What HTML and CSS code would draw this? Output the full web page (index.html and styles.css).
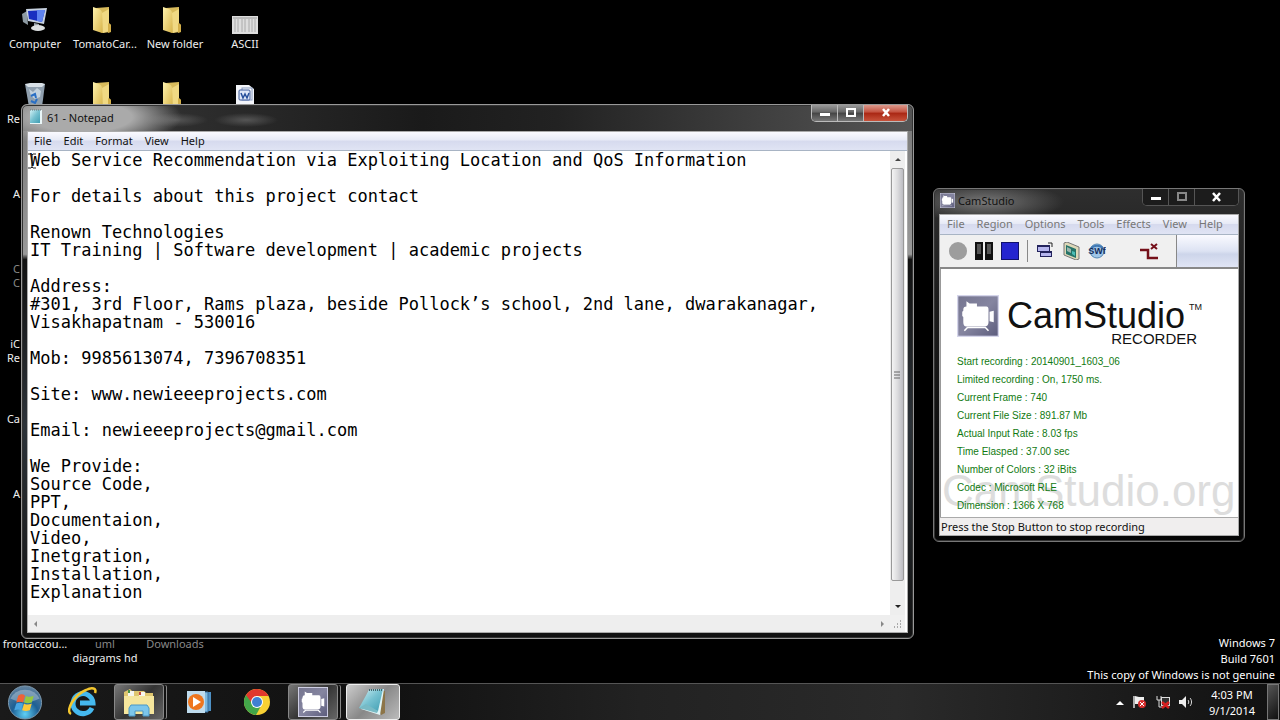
FILE: index.html
```html
<!DOCTYPE html>
<html lang="en">
<head>
    <meta charset="UTF-8">
    <meta name="viewport" content="width=device-width, initial-scale=1.0">
    <title>Desktop</title>
    <link rel="stylesheet" href="styles.css">
</head>
<body>
    <!-- shared icons -->
    <svg class="sprite" aria-hidden="true">
        <defs>
            <linearGradient id="folderFront" x1="0" y1="0" x2="1" y2="1">
                <stop offset="0" stop-color="#fff3ae"/>
                <stop offset="1" stop-color="#d9b64c"/>
            </linearGradient>
            <linearGradient id="camBack" x1="0" y1="0" x2="1" y2="1">
                <stop offset="0" stop-color="#75758f"/>
                <stop offset="0.5" stop-color="#8585a0"/>
                <stop offset="1" stop-color="#5c5c7c"/>
            </linearGradient>
            <linearGradient id="paper" x1="0" y1="0" x2="1" y2="1">
                <stop offset="0" stop-color="#d3f1f5"/>
                <stop offset="0.5" stop-color="#76c1d0"/>
                <stop offset="1" stop-color="#3f9db2"/>
            </linearGradient>
            <radialGradient id="orb" cx="0.5" cy="0.85" r="0.8">
                <stop offset="0" stop-color="#5fd0f5"/>
                <stop offset="0.5" stop-color="#1d5f94"/>
                <stop offset="1" stop-color="#5c7e9c"/>
            </radialGradient>
        </defs>
        <symbol id="folder" viewBox="0 0 20 28">
            <path d="M4 2l13-1v16l2 2v7l-9 1z" fill="#d9bc5c"/>
            <path d="M1 1l6 2c2 1 3 2 3 4v20l-9-3z" fill="url(#folderFront)"/>
            <path d="M10 7l1 20 6-2V3z" fill="#f0d983"/>
            <path d="M16 17l3 2v7l-3 1z" fill="#d3af49"/>
        </symbol>
        <symbol id="camera" viewBox="0 0 40 40">
            <rect x="0.5" y="0.5" width="39" height="39" fill="url(#camBack)" stroke="#d5d5ea" stroke-width="1.5"/>
            <path d="M9 6l3 2h7v5H9z" fill="#fff"/>
            <path d="M9 11h19q2 0 2 3v12q0 4-4 4H9q-3 0-3-4v-5l-1-1v-4l1-1v-1q0-3 3-3z" fill="#fff"/>
            <path d="M31 16l4-1v11l-4-1z" fill="#fff"/>
            <path d="M7 34l3-3h17l3 3" stroke="#fff" stroke-width="1.500" fill="none"/>
        </symbol>
        <symbol id="notes" viewBox="0 0 16 18">
            <path d="M2 2h12v14H2z" fill="#e9f6f8"/>
            <path d="M2 2h10v13H2z" fill="url(#paper)"/>
            <path d="M2 2h12" stroke="#60777c" stroke-dasharray="1 1"/>
        </symbol>
    </svg>

    <main class="desktop">
        <div class="icons">
            <a href="#" class="shortcut">
                <span class="glyph"><svg width="28" height="26" viewBox="0 0 28 26">
                    <path d="M1 7l5-3 1 14-5-3z" fill="#8d9aa2"/>
                    <path d="M5 2l21-1-3 16-16-3z" fill="#c6d1e0"/>
                    <path d="M7 4l17-1-3 12-13-3z" fill="#1a2fc0"/>
                    <path d="M16 3l8 0-3 12-5-1z" fill="#5f83ef"/>
                    <path d="M13 16l5 1v3h-5z" fill="#9aa3aa"/>
                    <ellipse cx="17" cy="21" rx="7" ry="3" fill="#dcdfe0"/>
                </svg></span>
                <span class="label">Computer</span>
            </a>
            <a href="#" class="shortcut"><span class="glyph dir"><svg width="20" height="28"><use href="#folder"/></svg></span><span class="label">TomatoCar...</span></a>
            <a href="#" class="shortcut"><span class="glyph dir"><svg width="20" height="28"><use href="#folder"/></svg></span><span class="label">New folder</span></a>
            <a href="#" class="shortcut">
                <span class="glyph low"><svg width="26" height="18" viewBox="0 0 26 18">
                    <rect width="26" height="18" fill="#ddd"/>
                    <path d="M3 3v13M6 3v13M10 3v13M13 3v13M17 3v13M20 3v13M23 3v13" stroke="#aaa"/>
                    <path d="M1 2h24" stroke="#999"/>
                </svg></span>
                <span class="label">ASCII</span>
            </a>

            <a href="#" class="shortcut cut">
                <span class="glyph"><svg width="22" height="26" viewBox="0 0 22 26">
                    <path d="M1 2l20 0-3 23H5z" fill="#8f9fae"/>
                    <path d="M1 2l5-1h12l3 1-3 3H4z" fill="#d8e0e6"/>
                    <path d="M5 7l4 3 4-4 4 3-1 6-5 2-4-3z" fill="#c4d2dd"/>
                    <path d="M7 14l4-2 1 4M13 17l-2 4-4-2" fill="none" stroke="#2b6fc4" stroke-width="2"/>
                </svg></span>
                <span class="label">Re</span>
            </a>
            <a href="#" class="shortcut" aria-label="Folder"><span class="glyph dir"><svg width="20" height="28"><use href="#folder"/></svg></span></a>
            <a href="#" class="shortcut" aria-label="Folder"><span class="glyph dir"><svg width="20" height="28"><use href="#folder"/></svg></span></a>
            <a href="#" class="shortcut" aria-label="Document">
                <span class="glyph"><svg width="20" height="22" viewBox="0 0 20 22">
                    <path d="M1 1h13l5 4v16H1z" fill="#f3f5fa"/>
                    <rect x="7" y="4" width="10" height="12" fill="#fff" stroke="#8497bd"/>
                    <rect x="4" y="6" width="11" height="10" rx="1" fill="#dfe8f8" stroke="#3d5a9a"/>
                    <path d="M6 9l2 5 2-4 2 4 2-5" fill="none" stroke="#27509c" stroke-width="1.5"/>
                </svg></span>
            </a>

            <a href="#" class="shortcut cut first"><span class="label">A</span></a>
            <a href="#" class="shortcut cut first dim"><span class="label">C<br>C</span></a>
            <a href="#" class="shortcut cut first"><span class="label">iC<br>Re</span></a>
            <a href="#" class="shortcut cut first"><span class="label">Ca</span></a>
            <a href="#" class="shortcut cut first"><span class="label">A</span></a>
            <span class="shortcut first"></span>
            <a href="#" class="shortcut first"><span class="label">frontaccou...</span></a>
            <a href="#" class="shortcut"><span class="label"><span class="faded">uml</span><br>diagrams hd</span></a>
            <a href="#" class="shortcut"><span class="label faded">Downloads</span></a>
        </div>

        <p class="build">Windows 7<br>Build 7601<br>This copy of Windows is not genuine</p>

        <section class="window notepad">
            <header class="titlebar">
                <svg width="16" height="18"><use href="#notes"/></svg>
                <h1 class="caption">61 - Notepad</h1>
                <div class="controls">
                    <button class="ctl" aria-label="Minimize"><svg width="12" height="10"><rect x="1" y="5" width="10" height="3" fill="#fff"/></svg></button>
                    <button class="ctl" aria-label="Maximize"><svg width="12" height="10"><rect x="2" y="1" width="8" height="7" fill="none" stroke="#fff" stroke-width="2"/></svg></button>
                    <button class="ctl close" aria-label="Close"><svg width="12" height="10"><path d="M3 1l6 7M9 1l-6 7" stroke="#fff" stroke-width="2.5"/></svg></button>
                </div>
            </header>
            <div class="client">
                <nav class="menubar">
                    <button>File</button>
                    <button>Edit</button>
                    <button>Format</button>
                    <button>View</button>
                    <button>Help</button>
                </nav>
                <div class="editor">
                    <textarea class="text" aria-label="Document text" wrap="off" spellcheck="false">
Web Service Recommendation via Exploiting Location and QoS Information

For details about this project contact

Renown Technologies
IT Training | Software development | academic projects

Address:
#301, 3rd Floor, Rams plaza, beside Pollock’s school, 2nd lane, dwarakanagar,
Visakhapatnam - 530016

Mob: 9985613074, 7396708351

Site: www.newieeeprojects.com

Email: newieeeprojects@gmail.com

We Provide:
Source Code,
PPT,
Documentaion,
Video,
Inetgration,
Installation,
Explanation</textarea>
                    <div class="vscroll">
                        <button aria-label="Scroll up"><svg width="8" height="6"><path d="M1 4l3-3 3 3z" fill="#444"/></svg></button>
                        <div class="thumb"><svg width="7" height="8"><path d="M0 1h6M0 4h6M0 7h6" stroke="#666"/></svg></div>
                        <button class="down" aria-label="Scroll down"><svg width="8" height="6"><path d="M1 1l3 3 3-3z" fill="#222"/></svg></button>
                    </div>
                    <div class="hscroll">
                        <button aria-label="Scroll left"><svg width="6" height="8"><path d="M4 1L1 4l3 3z" fill="#888"/></svg></button>
                        <button aria-label="Scroll right"><svg width="6" height="8"><path d="M1 1l3 3-3 3z" fill="#888"/></svg></button>
                    </div>
                    <div class="grip"><svg width="9" height="9"><path d="M7 1h1M4 4h1M7 4h1M1 7h1M4 7h1M7 7h1" stroke="#aaa" stroke-width="2"/></svg></div>
                </div>
                <svg class="caret" width="8" height="16" viewBox="0 0 8 16"><path d="M0 1h3l1 1 1-1h3M4 2v12M0 15h3l1-1 1 1h3" fill="none" stroke="#222"/></svg>
            </div>
        </section>

        <section class="window camstudio">
            <header class="titlebar">
                <svg width="15" height="15"><use href="#camera"/></svg>
                <h2 class="caption">CamStudio</h2>
                <div class="controls">
                    <button class="ctl" aria-label="Minimize"><svg width="12" height="10"><rect x="1" y="5" width="10" height="3" fill="#fff"/></svg></button>
                    <button class="ctl" aria-label="Maximize" disabled><svg width="12" height="10"><rect x="2" y="1" width="8" height="7" fill="none" stroke="#888" stroke-width="2"/></svg></button>
                    <button class="ctl close" aria-label="Close"><svg width="12" height="10"><path d="M2 1l7 8M9 1l-7 8" stroke="#fff" stroke-width="2.5"/></svg></button>
                </div>
            </header>
            <div class="client">
                <nav class="menubar">
                    <button>File</button>
                    <button>Region</button>
                    <button>Options</button>
                    <button>Tools</button>
                    <button>Effects</button>
                    <button>View</button>
                    <button>Help</button>
                </nav>
                <div class="toolbar">
                    <div class="tools">
                        <button aria-label="Record"><svg width="18" height="18"><circle cx="9" cy="9" r="9" fill="#9d9d9d"/></svg></button>
                        <button aria-label="Pause"><svg width="18" height="18"><path d="M0 0h8v18H0zM10 0h8v18h-8z" fill="#111"/><path d="M2 2h4v10H2zM12 2h4v10h-4z" fill="#555"/></svg></button>
                        <button aria-label="Stop"><svg width="18" height="18"><rect x="0.5" y="0.5" width="17" height="17" fill="#2424cf" stroke="#10106c"/></svg></button>
                        <span class="sep"></span>
                        <button aria-label="Video options"><svg width="18" height="18" viewBox="0 0 18 18">
                            <rect x="1.5" y="3.5" width="12" height="6" fill="#b6b6ee" stroke="#23235c"/>
                            <path d="M1 4h13" stroke="#23235c" stroke-width="2"/>
                            <rect x="4.5" y="9.5" width="11" height="5" fill="#b6b6ee" stroke="#23235c"/>
                            <path d="M4 10h12" stroke="#23235c" stroke-width="2"/>
                            <path d="M12 1h4v4" fill="none" stroke="#222"/>
                        </svg></button>
                        <button aria-label="Save to AVI"><svg width="18" height="18" viewBox="0 0 18 18">
                            <path d="M2 1l3-1 12 5v12l-3 1L2 13z" fill="#ddd8b8" stroke="#777"/>
                            <path d="M4 3l10 4v9L4 12z" fill="#247368"/>
                            <path d="M5 5l4 2v4l-4-2z" fill="#9cb6ad"/>
                            <path d="M10 9l3 1v4l-3-2z" fill="#4bbeb6"/>
                        </svg></button>
                        <button class="swf" aria-label="Convert to SWF"><svg width="18" height="18" viewBox="0 0 18 18">
                            <circle cx="9" cy="9" r="7" fill="#9fc6e8" stroke="#5588b4"/>
                            <path d="M3 6c4-3 8-3 12 0" stroke="#3f78b5" stroke-width="2" fill="none"/>
                            <text x="9" y="12" text-anchor="middle">SWf</text>
                        </svg></button>
                        <button class="detach" aria-label="Disable autopan"><svg width="18" height="18" viewBox="0 0 18 18">
                            <path d="M0 8h8v8h10" fill="none" stroke="#75101a" stroke-width="2.5"/>
                            <path d="M11 2l6 5M17 2l-6 5" stroke="#75101a" stroke-width="2"/>
                        </svg></button>
                    </div>
                    <div class="meter"></div>
                </div>
                <div class="pane">
                    <div class="brand">
                        <svg class="logo" width="42" height="42"><use href="#camera"/></svg>
                        <div class="wordmark">
                            <div class="name">CamStudio<sup>TM</sup></div>
                            <div class="sub">RECORDER</div>
                        </div>
                    </div>
                    <ul class="stats">
                        <li>Start recording : 20140901_1603_06</li>
                        <li>Limited recording : On, 1750 ms.</li>
                        <li>Current Frame : 740</li>
                        <li>Current File Size : 891.87 Mb</li>
                        <li>Actual Input Rate : 8.03 fps</li>
                        <li>Time Elasped : 37.00 sec</li>
                        <li>Number of Colors : 32 iBits</li>
                        <li>Codec : Microsoft RLE</li>
                        <li>Dimension : 1366 X 768</li>
                    </ul>
                    <div class="watermark">CamStudio.org</div>
                </div>
                <footer class="status">Press the Stop Button to stop recording</footer>
            </div>
        </section>
    </main>

    <footer class="taskbar">
        <button class="start" aria-label="Start"><svg width="38" height="36" viewBox="0 0 38 37">
            <circle cx="19" cy="19" r="17" fill="url(#orb)" stroke="#7f9bb0"/>
            <path d="M4 15a16 14 0 0 1 30 0c-9 5-21 5-30 0z" fill="#fff" opacity="0.3"/>
            <path d="M12 12c3-2 5-2 7 0l-2 7c-2-1-4-1-7 0z" fill="#ee6236"/>
            <path d="M20 12c2 2 5 1 8 0l-2 7c-3 1-5 1-8 0z" fill="#96c83e"/>
            <path d="M10 20c2-1 5-1 7 0l-2 7c-2-1-4-1-7 0z" fill="#48a5e2"/>
            <path d="M18 20c2 2 5 1 8 0l-2 7c-3 1-5 1-8 0z" fill="#fcc83a"/>
        </svg></button>
        <button class="task" aria-label="Internet Explorer"><svg width="30" height="30" viewBox="0 0 30 30">
            <path d="M24 21A10 10 0 1 1 25 16H12" fill="none" stroke="#45b9ef" stroke-width="5"/>
            <path d="M3 27C-3 24 6 8 18 3c6-3 11-2 9 3" fill="none" stroke="#f3c62e" stroke-width="2.5"/>
        </svg></button>
        <button class="task open stacked" aria-label="Windows Explorer"><svg width="32" height="30" viewBox="0 0 32 30">
            <path d="M1 5l6-3 2 2h12l2 2h7v20H1z" fill="#dfc66f"/>
            <path d="M5 4h6v5H5zM16 5h6v5h-6z" fill="#f6f6ee"/>
            <path d="M5 3h2v3H5z" fill="#469546"/>
            <path d="M16 5h2v3h-2z" fill="#c84a40"/>
            <path d="M1 9h30v18H1z" fill="#f5e69d"/>
            <path d="M6 29v-8l2-3h16l2 3v8h-6v-5h-8v5z" fill="#7cc6eb" stroke="#4a97c6"/>
        </svg></button>
        <button class="task" aria-label="Windows Media Player"><svg width="26" height="26" viewBox="0 0 26 26">
            <path d="M6 3h19v19H6z" fill="#4e91c5"/>
            <path d="M3 3h19v20H3z" fill="#7db9e0" stroke="#366f9f"/>
            <path d="M1 2h18v22H1z" fill="#bfdcee"/>
            <circle cx="10" cy="13" r="8" fill="#ee761f"/>
            <path d="M7 8l8 5-8 5z" fill="#fff"/>
        </svg></button>
        <button class="task" aria-label="Chrome"><svg width="28" height="28" viewBox="0 0 28 28">
            <circle cx="14" cy="14" r="13" fill="#f8d034"/>
            <path d="M14 14L3 7a13 13 0 0 0 10 20l5-9z" fill="#42a649"/>
            <path d="M3 7a13 13 0 0 1 22 0v1H14l-6 6z" fill="#e1382d"/>
            <circle cx="14" cy="14" r="6" fill="#fff"/>
            <circle cx="14" cy="14" r="5" fill="#3f80d2"/>
        </svg></button>
        <button class="task open stacked" aria-label="CamStudio"><svg width="30" height="30"><use href="#camera"/></svg></button>
        <button class="task open active" aria-label="Notepad"><svg width="34" height="30" viewBox="0 0 34 30">
            <path d="M14 4h15v22l-4 2z" fill="#8d7548"/>
            <path d="M13 3l15-1-4 26-19-6z" fill="#e0f4f6"/>
            <path d="M13 3l14-1-5 22L3 21z" fill="url(#paper)"/>
            <path d="M3 21l7-4 12 7-1 2z" fill="#78bac5"/>
            <path d="M13 3h14" stroke="#42666e" stroke-width="2" stroke-dasharray="1 1"/>
        </svg></button>

        <div class="tray">
            <button aria-label="Show hidden icons"><svg width="8" height="5"><path d="M0 5l4-4 4 4z" fill="#fff"/></svg></button>
            <button aria-label="Action Center"><svg width="14" height="14" viewBox="0 0 14 14">
                <path d="M1 1v12" stroke="#ddd" stroke-width="1.5"/><path d="M2 1l4 1h5v7H2z" fill="#eee"/>
                <circle cx="9" cy="9" r="4" fill="#d72d2d"/><path d="M7 7l4 4M11 7l-4 4" stroke="#fff"/>
            </svg></button>
            <button aria-label="Network"><svg width="14" height="14" viewBox="0 0 14 14">
                <path d="M1 1v4h4V1" fill="none" stroke="#ddd"/><path d="M3 5v7h4" fill="none" stroke="#ddd"/>
                <rect x="5.500" y="2.500" width="8" height="8" fill="#333" stroke="#ddd"/>
                <path d="M6 7l7 6M13 7l-7 6" stroke="#d71f1f" stroke-width="2.5"/>
            </svg></button>
            <button aria-label="Volume"><svg width="14" height="14" viewBox="0 0 14 14">
                <path d="M0 5h3l4-4v12L3 9H0z" fill="#eee"/><path d="M9 5c1 1 1 3 0 4M11 3c2 2 2 6 0 8" fill="none" stroke="#ddd"/>
            </svg></button>
        </div>
        <div class="clock">4:03 PM<br>9/1/2014</div>
        <button class="peek" aria-label="Show desktop"></button>
    </footer>
</body>
</html>
```
FILE: styles.css
```css
* {
    margin: 0;
    padding: 0;
    box-sizing: border-box;
}

body {
    display: flex;
    flex-direction: column;
    height: 100vh;
    overflow: hidden;
    background: #000;
    color: #fff;
    font-family: "Noto Sans", "Open Sans", sans-serif;
    font-size: 11px;
}

button {
    border: none;
    background: none;
    color: inherit;
    font: inherit;
}

svg {
    display: block;
}

.sprite {
    position: absolute;
    width: 0;
    height: 0;
}

/* Desktop */
.desktop {
    position: relative;
    flex: 1;
    min-height: 0;
}

.icons {
    display: grid;
    grid-template-columns: repeat(4, 70px);
    grid-auto-rows: 75px;
}

.shortcut {
    display: flex;
    flex-direction: column;
    align-items: center;
    padding-top: 6px;
    color: #eee;
    text-decoration: none;
    line-height: 14px;
    text-align: center;
    white-space: nowrap;
}

.shortcut.first {
    grid-column: 1;
    padding-top: 37px;
}

.shortcut .glyph {
    display: flex;
    align-items: center;
    height: 28px;
    margin-bottom: 3px;
}

.shortcut .glyph.low {
    align-items: flex-end;
}

.shortcut .glyph.dir {
    padding-right: 6px;
}

.shortcut:not(.first) > .label:only-child {
    margin-top: 31px;
}

.cut .label {
    align-self: flex-start;
    width: 20px;
    text-align: right;
}

.dim,
.faded {
    color: #888;
}

.build {
    position: absolute;
    right: 5px;
    bottom: 0;
    line-height: 16px;
    text-align: right;
}

/* Windows */
.window {
    position: absolute;
    display: flex;
    flex-direction: column;
    padding: 0 5px 5px;
    border: 1px solid #999;
    border-radius: 6px;
    box-shadow: inset 0 0 0 1px #333;
    color: #111;
}

.notepad {
    left: 21px;
    top: 104px;
    width: 893px;
    height: 535px;
    background:
        radial-gradient(ellipse 100px 30px at 60px 12px, #aaa 50%, transparent),
        radial-gradient(ellipse 32px 7px at 154px 15px, #555, transparent),
        radial-gradient(ellipse 32px 7px at 224px 15px, #555, transparent),
        linear-gradient(90deg, #666, #2e2e2e 18%, #1a1a1a 45%, #222 60%, #555) 0 0 / 100% 26px no-repeat,
        linear-gradient(#777, #999 28%, #111 29%, #2c3238 60%, #111);
}

.camstudio {
    left: 933px;
    top: 188px;
    width: 312px;
    height: 354px;
    border-color: #777;
    background:
        radial-gradient(ellipse 80px 20px at 50px 13px, #777, transparent),
        linear-gradient(#2e2e2e, #1c1c1c 30%, #050505);
}

.titlebar {
    display: flex;
    align-items: center;
    height: 26px;
    flex: none;
    padding: 0 0 2px 1px;
}

.camstudio .titlebar {
    height: 25px;
}

.caption {
    flex: 1;
    margin-left: 3px;
    font-size: 11px;
    font-weight: normal;
}

.controls {
    display: flex;
    align-self: flex-start;
    border: 1px solid #bbb;
    border-top: none;
    border-radius: 0 0 5px 5px;
    overflow: hidden;
}

.ctl {
    display: flex;
    align-items: center;
    justify-content: center;
    width: 26px;
    height: 16px;
    border-right: 1px solid #bbb;
    background: linear-gradient(#999, #666 45%, #444 50%, #777);
}

.ctl.close {
    width: 43px;
    border-right: none;
    background: linear-gradient(#dc9a8d, #c4513f 45%, #a92613 50%, #c7523b);
}

.camstudio .controls,
.camstudio .ctl {
    border-color: #555;
    background: #1c1c1c;
}

.client {
    position: relative;
    display: flex;
    flex-direction: column;
    flex: 1;
    min-height: 0;
    border: 1px solid #aaa;
    background: #fff;
}

.menubar {
    display: flex;
    flex: none;
    height: 19px;
    background: linear-gradient(#fafaff, #e7eaf6 45%, #d6daee 50%, #e0e4f4);
    border-bottom: 1px solid #a8b4c4;
}

.menubar button {
    padding: 0 6px 2px;
}

.camstudio .menubar {
    height: 20px;
    padding-left: 1px;
    color: #777;
}

/* Notepad */
.editor {
    display: grid;
    grid-template-columns: 1fr 15px;
    grid-template-rows: 1fr 17px;
    flex: 1;
    min-height: 0;
    padding-right: 2px;
}

.text {
    display: block;
    width: 100%;
    height: 100%;
    padding: 0 2px;
    border: none;
    outline: none;
    resize: none;
    overflow: hidden;
    background: #fff;
    color: #000;
    font-family: "DejaVu Sans Mono", monospace;
    font-size: 17px;
    line-height: 18px;
}

.vscroll,
.hscroll {
    display: flex;
    background: #eee;
}

.vscroll {
    flex-direction: column;
}

.hscroll {
    justify-content: space-between;
}

.vscroll button,
.hscroll button {
    display: flex;
    align-items: center;
    justify-content: center;
    flex: none;
    width: 15px;
    height: 17px;
}

.thumb {
    display: flex;
    align-items: center;
    justify-content: center;
    flex: 1;
    margin: 0 1px 17px;
    border: 1px solid #999;
    border-radius: 2px;
    background: linear-gradient(90deg, #f4f4f4, #dcdcde 50%, #bcbcc2);
}

.grip {
    display: flex;
    align-items: flex-end;
    justify-content: flex-end;
    padding: 3px;
    background: #f0f0f0;
}

.caret {
    position: absolute;
    left: 0;
    top: 21px;
}

/* CamStudio */
.toolbar {
    display: flex;
    flex: none;
    height: 34px;
    background: #f0f0f0;
    border-bottom: 2px solid #888;
}

.tools {
    display: flex;
    align-items: center;
    flex: 1;
    gap: 8px;
    padding-left: 9px;
}

.sep {
    width: 1px;
    height: 22px;
    background: #888;
}

.swf text {
    font-family: "Liberation Sans", sans-serif;
    font-size: 9px;
    font-weight: bold;
    fill: #122c5c;
}

.detach {
    margin-left: auto;
    margin-right: 18px;
}

.meter {
    width: 62px;
    border-left: 1px solid #888;
    background: linear-gradient(#fafaff, #dde3f3 50%, #cdd5ea 60%, #e0e5f5);
}

.pane {
    position: relative;
    z-index: 0;
    flex: 1;
    min-height: 0;
    padding: 26px 16px 0;
    border-left: 1px solid #999;
    font-family: "Liberation Sans", Arial, sans-serif;
}

.brand {
    display: flex;
    gap: 8px;
    height: 58px;
}

.brand .logo {
    flex: none;
}

.name {
    display: flex;
    font-size: 36px;
    line-height: 42px;
}

.name sup {
    margin-left: 4px;
    font-size: 9px;
    line-height: 24px;
}

.sub {
    margin-top: -6px;
    padding-right: 5px;
    font-size: 15px;
    line-height: 16px;
    text-align: right;
}

.stats {
    list-style: none;
    color: #117a11;
    font-size: 10px;
    line-height: 18px;
}

.watermark {
    position: absolute;
    z-index: -1;
    left: 1px;
    bottom: 0;
    color: #ddd;
    font-size: 44px;
    line-height: 52px;
}

.status {
    flex: none;
    height: 18px;
    padding-left: 1px;
    border-top: 1px solid #aaa;
    background: #f0eeee;
    line-height: 18px;
}

/* Taskbar */
.taskbar {
    display: flex;
    align-items: stretch;
    flex: none;
    height: 37px;
    border-top: 1px solid #555;
    background: linear-gradient(90deg, #1a1a1a, #111 30%, #222 50%, #2a2a2a 70%, #111);
}

.start {
    display: flex;
    width: 54px;
    padding-left: 6px;
}

.task {
    display: flex;
    align-items: center;
    justify-content: center;
    width: 54px;
    margin: 0 2px;
}

.task.open {
    border: 1px solid #888;
    border-radius: 3px;
    background: linear-gradient(135deg, #777, #333 50%, #666);
}

.task.stacked {
    width: 50px;
    margin: 0 6px 0 2px;
    box-shadow: 3px 0 0 -1px #111, 4px 0 0 -1px #888;
}

.task.active {
    border-color: #eee;
    background: linear-gradient(135deg, #ccc, #888 50%, #bbb);
}

.tray {
    display: flex;
    align-items: center;
    gap: 9px;
    margin-left: auto;
}

.clock {
    width: 70px;
    padding-top: 3px;
    margin-left: 4px;
    line-height: 16px;
    text-align: center;
}

.peek {
    width: 12px;
    margin-right: 1px;
    border: 1px solid #777;
    background: linear-gradient(135deg, #555, #111);
}
```
